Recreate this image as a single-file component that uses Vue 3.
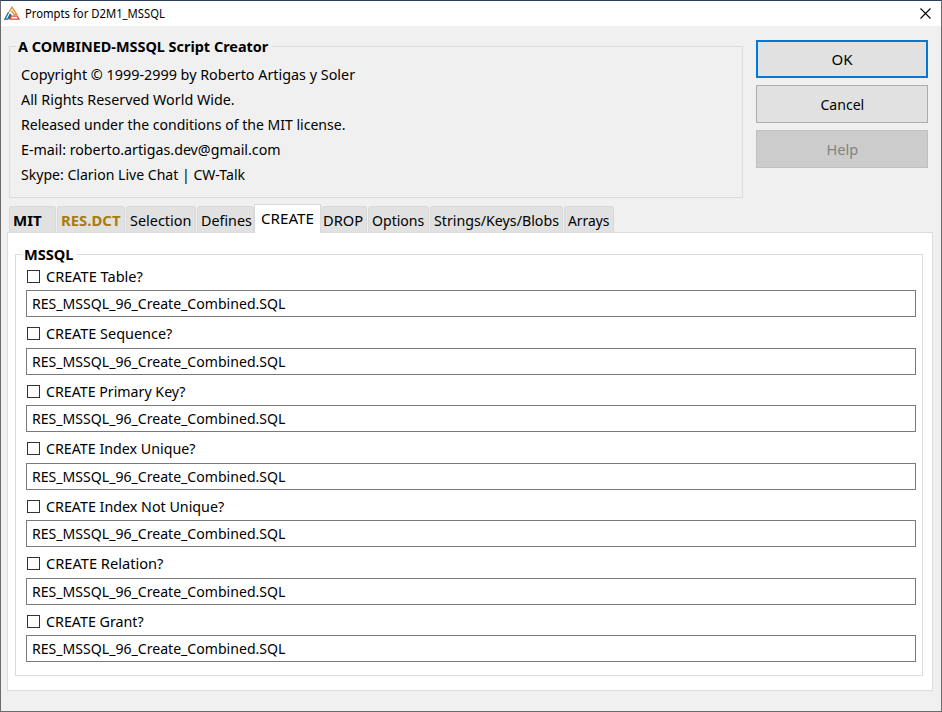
<script setup>
import { ref } from 'vue'

// Condenses a label horizontally so that it fills the given width.
const vFit = {
  mounted(el, { value }) {
    el.style.transform = `scaleX(${value / el.offsetWidth})`
  },
}

const about = [
  { text: 'Copyright © 1999-2999 by Roberto Artigas y Soler', w: 334 },
  { text: 'All Rights Reserved World Wide.', w: 214 },
  { text: 'Released under the conditions of the MIT license.', w: 324 },
  { text: 'E-mail: roberto.artigas.dev@gmail.com', w: 260 },
  { text: 'Skype: Clarion Live Chat | CW-Talk', w: 224 },
]

const tabs = [
  { text: 'MIT', w: 29, cls: 'mit' },
  { text: 'RES.DCT', w: 59.5, cls: 'res' },
  { text: 'Selection', w: 61.5, cls: 'selection' },
  { text: 'Defines', w: 50.5, cls: 'defines' },
  { text: 'CREATE', w: 52.5, cls: 'active' },
  { text: 'DROP', w: 40, cls: 'drop' },
  { text: 'Options', w: 52.5, cls: 'options' },
  { text: 'Strings/Keys/Blobs', w: 125, cls: 'strings' },
  { text: 'Arrays', w: 41.5, cls: 'arrays' },
]

const file = 'RES_MSSQL_96_Create_Combined.SQL'
const entries = ref([
  { text: 'CREATE Table?', w: 97 },
  { text: 'CREATE Sequence?', w: 126 },
  { text: 'CREATE Primary Key?', w: 140 },
  { text: 'CREATE Index Unique?', w: 149 },
  { text: 'CREATE Index Not Unique?', w: 178 },
  { text: 'CREATE Relation?', w: 117 },
  { text: 'CREATE Grant?', w: 98 },
])
</script>

<template>
  <div class="window">
    <header class="titlebar">
      <svg class="logo" width="16" height="15" viewBox="0 0 16 15" fill="none" stroke-width="1.3">
        <path d="M5.2 5.8 8 1.2 12.8 8.6H10.2L7.6 4.6" stroke="#e08a2c" />
        <path d="M4.6 6.2 .8 13.2H3.6L6.4 7.8M4.6 13.2 7.2 8.6" stroke="#1f6091" />
        <path d="M7.2 10.2H13.2L15 13.2H6.2Z" stroke="#e8492f" />
      </svg>
      <span v-fit="140" class="t caption">Prompts for D2M1_MSSQL</span>
      <svg class="close" width="11" height="11" viewBox="0 0 11 11">
        <path d="M.5 .5 10.5 10.5M10.5 .5 .5 10.5" stroke="#000" stroke-width="1.1" />
      </svg>
    </header>

    <section class="top">
      <div class="group about">
        <div class="legend"><span v-fit="250" class="t">A COMBINED-MSSQL Script Creator</span></div>
        <div v-for="line in about" :key="line.text" class="line">
          <span v-fit="line.w" class="t">{{ line.text }}</span>
        </div>
      </div>
      <div class="buttons">
        <button class="btn ok"><span v-fit="21" class="t">OK</span></button>
        <button class="btn"><span v-fit="44" class="t">Cancel</span></button>
        <button class="btn help" disabled><span v-fit="32" class="t">Help</span></button>
      </div>
    </section>

    <nav class="tabs">
      <div v-for="tab in tabs" :key="tab.text" class="tab" :class="tab.cls">
        <span v-fit="tab.w" class="t">{{ tab.text }}</span>
      </div>
    </nav>

    <main class="panel">
      <div class="group prompts">
        <div class="legend"><span v-fit="49.5" class="t">MSSQL</span></div>
        <div v-for="e in entries" :key="e.text" class="entry">
          <div class="check"><i class="box"></i><span v-fit="e.w" class="t">{{ e.text }}</span></div>
          <div class="field"><span v-fit="253.5" class="t">{{ file }}</span></div>
        </div>
      </div>
    </main>
  </div>
</template>

<style>
body { margin: 0; overflow: hidden; }
</style>

<style scoped>
.window {
  box-sizing: border-box; width: 942px; height: 712px;
  border: 1px solid #6b6b6b; border-top-color: #2a3d5c;
  background: #f0f0f0; color: #000;
  font: 15px/20px "Noto Sans", "Open Sans", sans-serif;
  display: flex; flex-direction: column;
}
.t { display: inline-block; white-space: nowrap; transform-origin: 0 50%; flex: none; }
.titlebar { height: 25px; background: #fff; display: flex; align-items: center; padding: 0 10px 0 3px; }
.logo { margin-right: 5px; }
.caption { font-size: 12px; line-height: 16px; }
.close { margin-left: auto; }
.top { display: flex; height: 178px; }
.group { box-sizing: border-box; border: 1px solid #dcdcdc; }
.legend { height: 20px; line-height: 18px; font-weight: 700; display: flex; }
.about { width: 734px; height: 152px; margin: 20px 0 0 8px; padding-left: 11px; }
.about .legend { width: 254px; margin: -10px 0 0 -5px; padding-left: 2px; background: #f0f0f0; }
.line { height: 25px; line-height: 25px; display: flex; }
.about .legend + .line { margin-top: 5px; }
.buttons { display: flex; flex-direction: column; gap: 7px; margin: 14px 0 0 13px; }
.btn {
  box-sizing: border-box; width: 172px; height: 38px; padding: 0;
  border: 1px solid #adadad; background: #e1e1e1; color: #000; font: inherit;
  display: flex; align-items: center; justify-content: center;
}
.btn .t { transform-origin: 50% 50%; }
.ok { border: 2px solid #0078d7; }
.help { background: #ccc; border-color: #bfbfbf; color: #838383; }
.tabs { display: flex; align-items: flex-end; height: 28px; padding-left: 8px; position: relative; z-index: 1; }
.tab {
  box-sizing: border-box; height: 26px; padding: 4px 0 0 3px; margin-right: 1px;
  border: 1px solid #d9d9d9; border-bottom: 0; border-radius: 3px 3px 0 0; background: #e1e1e1;
  line-height: 18px;
}
.mit { width: 47px; font-weight: 700; }
.res { width: 68px; font-weight: 700; color: #a87c0c; }
.selection { width: 70px; }
.defines { width: 57px; margin-right: 0; }
.active {
  width: 67px; height: 29px; margin: 0 0 -1px; padding: 4px 0 0 6px;
  background: #fff; border-radius: 0;
}
.drop { width: 46px; padding-left: 2px; border-left: 0; }
.options { width: 61px; }
.strings { width: 133px; }
.arrays { width: 50px; }
.panel {
  box-sizing: border-box; width: 926px; height: 459px; margin-left: 6px;
  border: 1px solid #dcdcdc; background: #fff; padding: 21px 0 0 7px;
}
.prompts { width: 908px; height: 422px; padding-left: 10px; }
.prompts .legend { width: 53px; margin: -10px 0 .9px -4px; padding-left: 2px; background: #fff; }
.entry { height: 57.5px; }
.check { display: flex; align-items: center; height: 20.6px; padding-left: 1px; }
.check .t { margin-bottom: .8px; }
.box { box-sizing: border-box; width: 13px; height: 13px; border: 1px solid #333; background: #fff; margin-right: 6px; }
.field {
  box-sizing: border-box; width: 890px; height: 27px; margin-top: 3.6px;
  border: 1px solid #7a7a7a; background: #fff; padding-left: 5px;
  display: flex; align-items: center; line-height: 19px;
}
</style>
